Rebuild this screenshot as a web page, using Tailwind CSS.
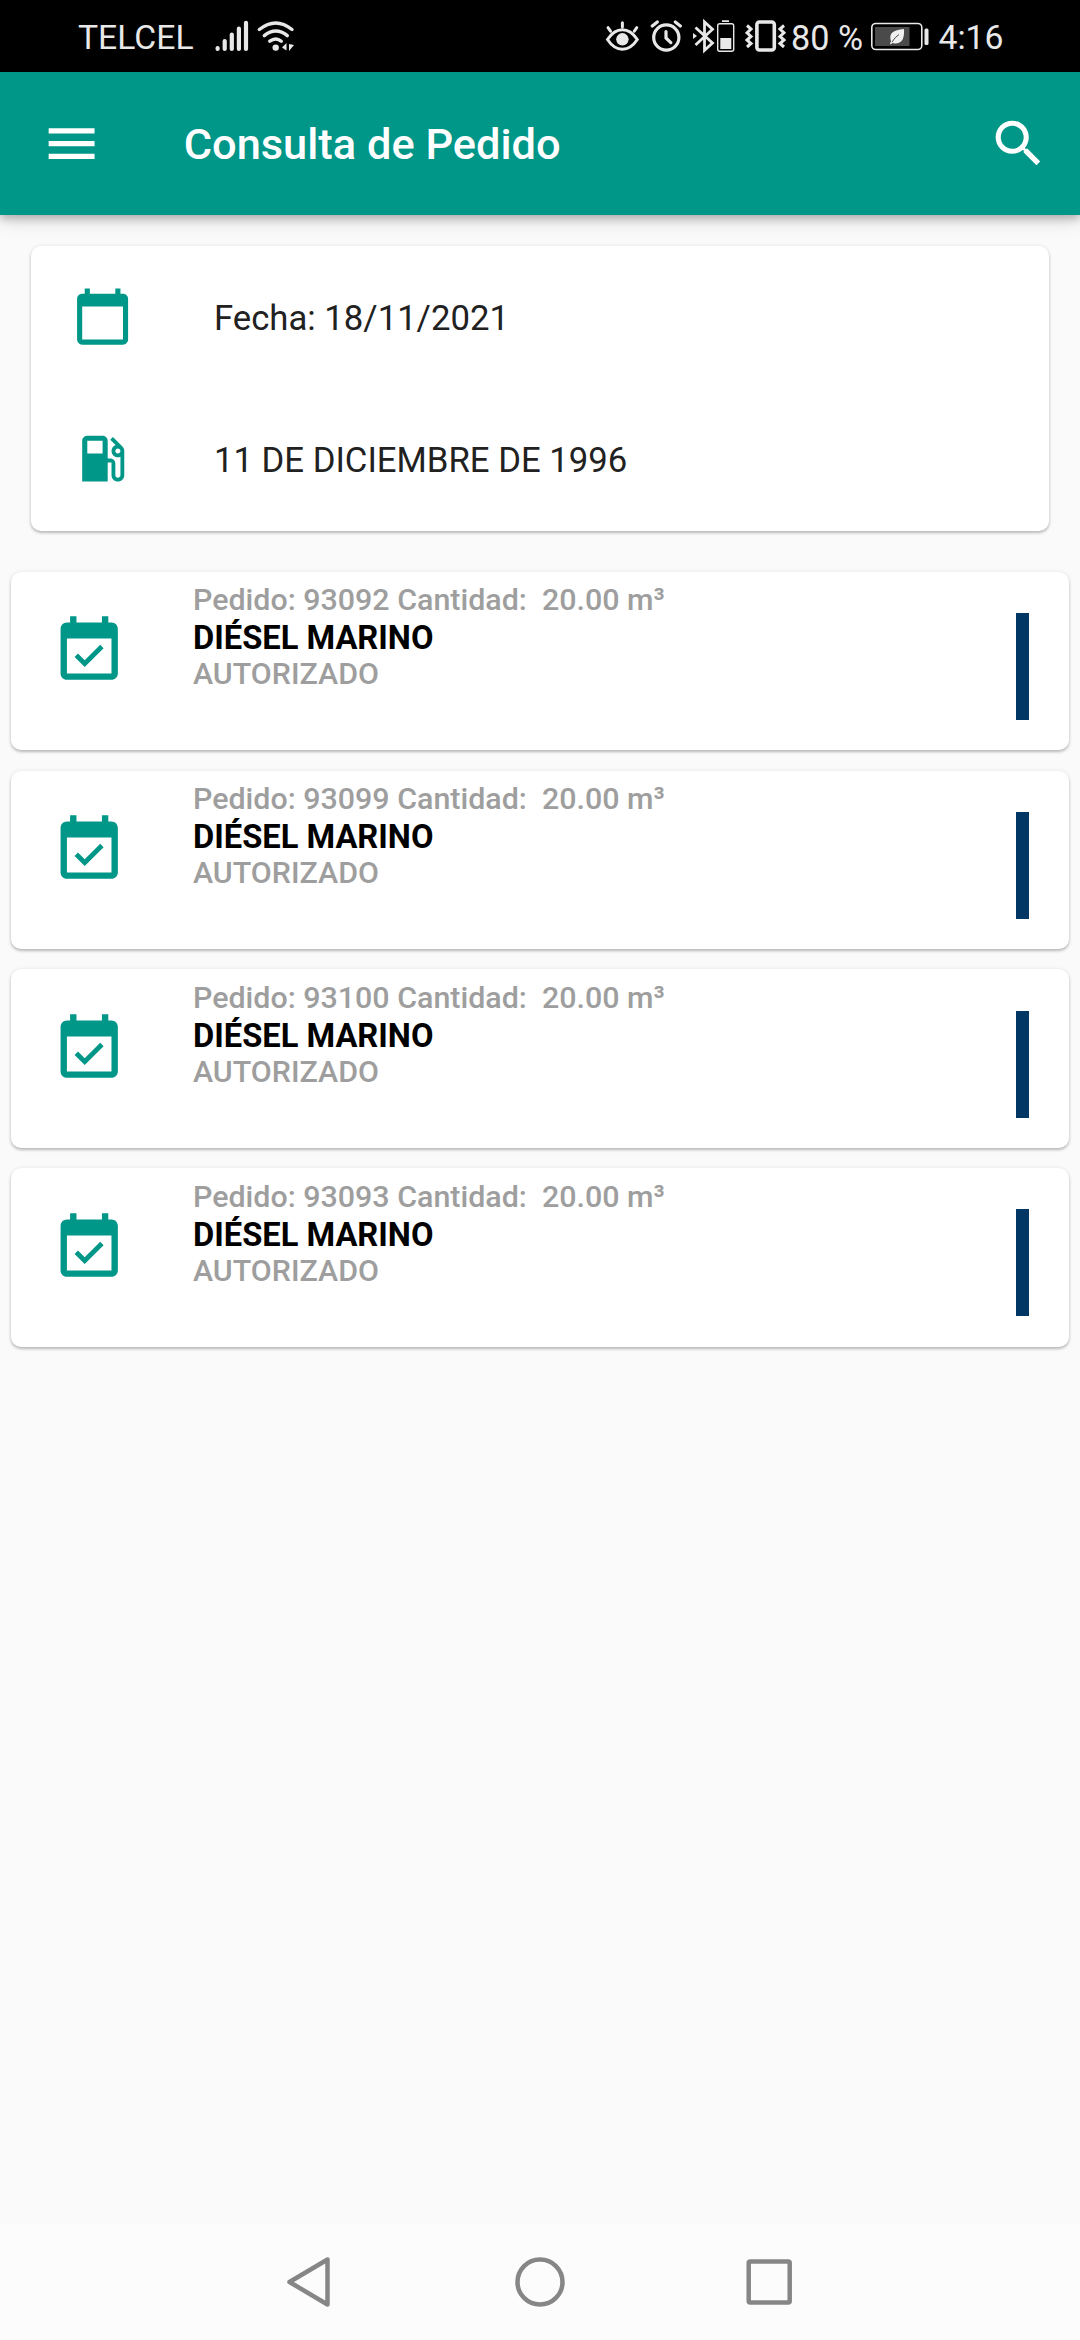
<!DOCTYPE html>
<html lang="es">
<head>
<meta charset="utf-8">
<title>Consulta de Pedido</title>
<script src="https://cdn.jsdelivr.net/npm/@tailwindcss/browser@4"></script>
</head>
<body class="font-['Roboto',sans-serif] bg-[#fafafa]">
<svg class="hidden">
  <symbol id="event" viewBox="0 0 24 24"><path d="M16.53 11.06L15.47 10l-4.88 4.88-2.12-2.12-1.06 1.06L10.59 17l5.94-5.94zM19 3h-1V1h-2v2H8V1H6v2H5c-1.11 0-1.99.9-1.99 2L3 19c0 1.1.89 2 2 2h14c1.1 0 2-.9 2-2V5c0-1.1-.9-2-2-2zm0 16H5V8h14v11z"/></symbol>
</svg>
<div class="w-[1080px] h-[2340px] flex flex-col overflow-hidden">

  <!-- Status bar -->
  <div class="h-[72px] shrink-0 bg-black text-[#e8e8e8] flex items-center text-[33.7px] leading-[72px] whitespace-pre pl-[78px]">
    <span class="w-[137px] h-[72px] pt-[2px]">TELCEL</span>
    <svg class="w-[34px] h-[72px]" viewBox="215 0 34 72" fill="none" stroke="currentColor" stroke-width="4.2" stroke-linecap="round"><path d="M217.6 48v1M224.7 41v8M231.8 34.500v14.500M238.900 28.500v20.500M246 22.800v26.200"/></svg>
    <svg class="ml-[7px] w-[40px] h-[72px]" viewBox="256 0 40 72" fill="none" stroke="currentColor" stroke-width="3.4" stroke-linecap="round"><path d="M259.300 29.500Q275.800 16.300 292 29.500M264.300 35.600Q275.800 26.300 287.300 35.600M269.800 41.200Q275.800 36.600 281.300 41.200"/><circle cx="275.700" cy="47.600" r="3.200" fill="currentColor" stroke="none"/><path d="M282 47.500l4.500-4.500v7.500zM289 44v7l5-6z" fill="currentColor" stroke="none"/></svg>
    <svg class="ml-[309px] w-[36px] h-[72px]" viewBox="605 0 36 72" fill="none" stroke="currentColor" stroke-width="3" stroke-linecap="round"><path d="M607.500 39.500Q614 29.800 622.400 29.800T637.300 39.500Q631 49.200 622.400 49.200T607.500 39.500zM622.400 22.700v4M608 27.700l2.500 3.500M636.800 27.700l-2.500 3.500"/><circle cx="622.400" cy="39.300" r="6.200" fill="currentColor" stroke="none"/></svg>
    <svg class="ml-[9px] w-[32px] h-[72px]" viewBox="650 0 32 72" fill="none" stroke="currentColor" stroke-width="3.200" stroke-linecap="round"><circle cx="666.300" cy="37.500" r="12.600"/><path d="M652.300 26l5-4M680.300 26l-5-4M666 31.500v6.500l4.800 4.600"/></svg>
    <svg class="ml-[10px] w-[44px] h-[72px]" viewBox="692 0 44 72" fill="none" stroke="currentColor" stroke-width="2.800"><path d="M695.500 27.500L712.500 43l-8 7.300V22l8 7.300L695.500 45"/><path d="M693 33l4 3-4 3z" fill="currentColor" stroke="none"/><rect x="717.700" y="23.700" width="16" height="27.500" rx="2" stroke-width="1.400"/><path d="M722 20.300h7V22h-7zM720.300 38h11v11h-11z" fill="currentColor" stroke="none"/></svg>
    <svg class="ml-[9px] w-[42px] h-[72px]" viewBox="745 0 42 72" fill="none" stroke="currentColor" stroke-width="3.600"><rect x="756.900" y="22" width="17.400" height="28" rx="2.500"/><path d="M747 25.500l4 3.500-4 3.800 4 3.700-4 3.500 4 3.500-4 3.500M784 25.500l-4 3.500 4 3.800-4 3.700 4 3.500-4 3.500 4 3.500" stroke-width="3"/></svg>
    <span class="ml-[4px] w-[79px] h-[72px] pt-[2px] text-[34.2px]">80 %</span>
    <svg class="w-[60px] h-[72px]" viewBox="870 0 60 72"><rect x="871.800" y="23.500" width="50" height="26" rx="4" fill="none" stroke="currentColor" stroke-width="1.600"/><path d="M875 27h34.500v19H875z" fill="#4a4a4a"/><path d="M904 29c.5 9-1.500 14.500-9 14.500-1 0-2-.5-2.500-.5l-2 1.500-.5-1 1-2C888.500 33 893 30 904 29z" fill="#f0f0f0"/><path d="M892 42q3-5 7-7.500" stroke="#4a4a4a" stroke-width="1" fill="none"/><rect x="924.500" y="28.500" width="4" height="16.500" rx="1.500" fill="currentColor"/></svg>
    <span class="ml-[8.500px] h-[72px] pt-[2px]">4:16</span>
  </div>

  <!-- App bar -->
  <header class="relative h-[143px] shrink-0 bg-[#009688] text-white flex items-center pl-[40.500px] pr-[30.500px] shadow-[0_4px_8px_rgba(0,0,0,0.22),0_6px_18px_rgba(0,0,0,0.12)]">
    <svg class="w-[61.200px] h-[61.200px]" viewBox="0 0 24 24" fill="currentColor"><path d="M3 18h18v-2H3v2zm0-5h18v-2H3v2zm0-7v2h18V6H3z"/></svg>
    <h1 class="ml-[82px] flex-1 pt-[2px] text-[43.400px] leading-[50px] font-medium">Consulta de Pedido</h1>
    <svg class="w-[61.200px] h-[61.200px]" viewBox="0 0 24 24" fill="currentColor"><path d="M15.500 14h-.79l-.28-.27C15.410 12.590 16 11.110 16 9.500 16 5.910 13.090 3 9.500 3S3 5.910 3 9.500 5.910 16 9.500 16c1.610 0 3.090-.59 4.230-1.570l.27.28v.79l5 4.990L20.490 19l-4.990-5zm-6 0C7.010 14 5 11.990 5 9.500S7.010 5 9.500 5 14 7.010 14 9.500 11.990 14 9.500 14z"/></svg>
  </header>

  <!-- Summary -->
  <section class="mt-[31px] mx-[31px] h-[285px] shrink-0 bg-white rounded-[10px] text-[34.700px] text-[#212121] shadow-[0_2px_3px_rgba(0,0,0,0.24),0_0_5px_rgba(0,0,0,0.07)]">
    <div class="h-[142.500px] flex items-center pl-[40.500px]">
      <svg class="w-[61.200px] h-[61.200px] mb-[2px] text-[#009688]" viewBox="0 0 24 24" fill="currentColor"><path d="M20 3h-1V1h-2v2H7V1H5v2H4c-1.100 0-2 .9-2 2v16c0 1.100.9 2 2 2h16c1.100 0 2-.9 2-2V5c0-1.100-.9-2-2-2zm0 18H4V8h16v13z"/></svg>
      <span class="ml-[81.300px] pt-[2px] leading-[40px]">Fecha: 18/11/2021</span>
    </div>
    <div class="h-[142.500px] flex items-center pl-[40.500px]">
      <svg class="w-[61.200px] h-[61.200px] mb-[2px] text-[#009688]" viewBox="0 0 24 24" fill="currentColor"><path d="M19.770 7.230l.01-.01-3.720-3.720L15 4.560l2.110 2.110c-.94.36-1.610 1.260-1.610 2.330 0 1.380 1.120 2.500 2.500 2.500.36 0 .69-.08 1-.21v7.210c0 .55-.45 1-1 1s-1-.45-1-1V14c0-1.100-.9-2-2-2h-1V5c0-1.100-.9-2-2-2H6c-1.100 0-2 .9-2 2v16h10v-7.500h1.500v5c0 1.380 1.120 2.500 2.500 2.500s2.500-1.120 2.500-2.500V9c0-.69-.28-1.320-.73-1.770zM12 10H6V5h6v5zm6 0c-.55 0-1-.45-1-1s.45-1 1-1 1 .45 1 1-.45 1-1 1z"/></svg>
      <span class="ml-[81.300px] leading-[40px]">11 DE DICIEMBRE DE 1996</span>
    </div>
  </section>

  <!-- Orders -->
  <main class="mt-[40.800px] mx-[11px] flex-1 flex flex-col gap-[20.300px]">
    <article class="h-[178.500px] flex items-start bg-white rounded-[10px] pl-[40.200px] pr-[40px] shadow-[0_2px_3px_rgba(0,0,0,0.24),0_0_5px_rgba(0,0,0,0.07)]">
      <svg class="mt-[41.700px] w-[76.400px] h-[76.400px] fill-[#009688]"><use href="#event"/></svg>
      <div class="ml-[65.400px] mt-[10.500px] flex-1 font-medium text-[30.400px] text-[#9e9e9e]">
        <p class="leading-[36px] whitespace-pre">Pedido: 93092 Cantidad:  20.00 m³</p>
        <p class="leading-[40px] text-[32.700px] font-bold text-black">DIÉSEL MARINO</p>
        <p class="leading-[32px]">AUTORIZADO</p>
      </div>
      <div class="mt-[41.200px] w-[13px] h-[107px] bg-[#003764]"></div>
    </article>
    <article class="h-[178.500px] flex items-start bg-white rounded-[10px] pl-[40.200px] pr-[40px] shadow-[0_2px_3px_rgba(0,0,0,0.24),0_0_5px_rgba(0,0,0,0.07)]">
      <svg class="mt-[41.700px] w-[76.400px] h-[76.400px] fill-[#009688]"><use href="#event"/></svg>
      <div class="ml-[65.400px] mt-[10.500px] flex-1 font-medium text-[30.400px] text-[#9e9e9e]">
        <p class="leading-[36px] whitespace-pre">Pedido: 93099 Cantidad:  20.00 m³</p>
        <p class="leading-[40px] text-[32.700px] font-bold text-black">DIÉSEL MARINO</p>
        <p class="leading-[32px]">AUTORIZADO</p>
      </div>
      <div class="mt-[41.200px] w-[13px] h-[107px] bg-[#003764]"></div>
    </article>
    <article class="h-[178.500px] flex items-start bg-white rounded-[10px] pl-[40.200px] pr-[40px] shadow-[0_2px_3px_rgba(0,0,0,0.24),0_0_5px_rgba(0,0,0,0.07)]">
      <svg class="mt-[41.700px] w-[76.400px] h-[76.400px] fill-[#009688]"><use href="#event"/></svg>
      <div class="ml-[65.400px] mt-[10.500px] flex-1 font-medium text-[30.400px] text-[#9e9e9e]">
        <p class="leading-[36px] whitespace-pre">Pedido: 93100 Cantidad:  20.00 m³</p>
        <p class="leading-[40px] text-[32.700px] font-bold text-black">DIÉSEL MARINO</p>
        <p class="leading-[32px]">AUTORIZADO</p>
      </div>
      <div class="mt-[41.200px] w-[13px] h-[107px] bg-[#003764]"></div>
    </article>
    <article class="h-[178.500px] flex items-start bg-white rounded-[10px] pl-[40.200px] pr-[40px] shadow-[0_2px_3px_rgba(0,0,0,0.24),0_0_5px_rgba(0,0,0,0.07)]">
      <svg class="mt-[41.700px] w-[76.400px] h-[76.400px] fill-[#009688]"><use href="#event"/></svg>
      <div class="ml-[65.400px] mt-[10.500px] flex-1 font-medium text-[30.400px] text-[#9e9e9e]">
        <p class="leading-[36px] whitespace-pre">Pedido: 93093 Cantidad:  20.00 m³</p>
        <p class="leading-[40px] text-[32.700px] font-bold text-black">DIÉSEL MARINO</p>
        <p class="leading-[32px]">AUTORIZADO</p>
      </div>
      <div class="mt-[41.200px] w-[13px] h-[107px] bg-[#003764]"></div>
    </article>
  </main>

  <!-- System navigation -->
  <nav class="h-[116px] shrink-0 bg-[#fcfcfc] flex items-center justify-between pl-[284px] pr-[284px]">
    <svg class="w-[50px] h-[54px]" viewBox="0 0 50 54" fill="none" stroke="#868686" stroke-width="4.500" stroke-linejoin="round"><path d="M43.500 4.500v45L5.500 27z"/></svg>
    <svg class="w-[54px] h-[54px]" viewBox="0 0 54 54" fill="none" stroke="#868686" stroke-width="4.500"><circle cx="27" cy="27" r="22.500"/></svg>
    <svg class="w-[50px] h-[54px]" viewBox="0 0 50 54" fill="none" stroke="#868686" stroke-width="4.500"><rect x="2.700" y="6.500" width="41" height="41" rx="1.500"/></svg>
  </nav>
</div>
</body>
</html>
